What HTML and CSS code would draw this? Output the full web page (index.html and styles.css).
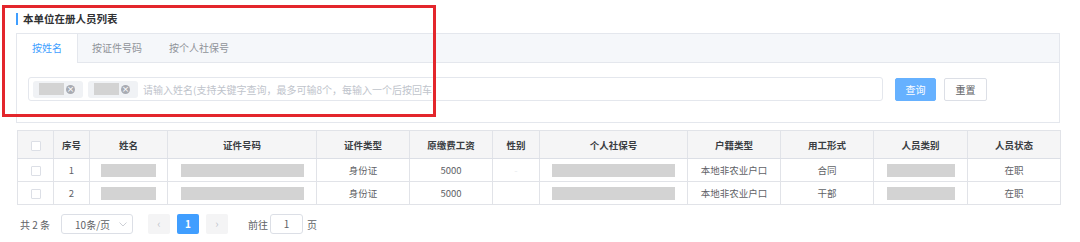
FILE: index.html
```html
<!DOCTYPE html>
<html lang="zh-CN">
<head>
    <meta charset="UTF-8">
    <title>本单位在册人员列表</title>
    <link rel="stylesheet" href="styles.css">
</head>
<body>
    <div class="page">
        <div class="section-title">本单位在册人员列表</div>

        <div class="tabs-card">
            <div class="tabs-header">
                <div class="tab active">按姓名</div>
                <div class="tab">按证件号码</div>
                <div class="tab">按个人社保号</div>
            </div>
            <div class="tabs-body">
                <div class="tag-input">
                    <span class="tag"><span class="mask"></span><span class="tag-close">×</span></span>
                    <span class="tag"><span class="mask"></span><span class="tag-close">×</span></span>
                    <span class="placeholder">请输入姓名(支持关键字查询，最多可输8个，每输入一个后按回车)</span>
                </div>
                <button class="btn btn-primary">查询</button>
                <button class="btn">重置</button>
            </div>
        </div>

        <table class="data-table">
            <colgroup>
                <col style="width:36px">
                <col style="width:36px">
                <col style="width:78px">
                <col style="width:149px">
                <col style="width:93px">
                <col style="width:83px">
                <col style="width:47px">
                <col style="width:148px">
                <col style="width:93px">
                <col style="width:93px">
                <col style="width:94px">
                <col style="width:93px">
            </colgroup>
            <thead>
                <tr>
                    <th><span class="checkbox"></span></th>
                    <th>序号</th>
                    <th>姓名</th>
                    <th>证件号码</th>
                    <th>证件类型</th>
                    <th>原缴费工资</th>
                    <th>性别</th>
                    <th>个人社保号</th>
                    <th>户籍类型</th>
                    <th>用工形式</th>
                    <th>人员类别</th>
                    <th>人员状态</th>
                </tr>
            </thead>
            <tbody>
                <tr>
                    <td><span class="checkbox"></span></td>
                    <td>1</td>
                    <td><span class="mask mask-name"></span></td>
                    <td><span class="mask mask-id"></span></td>
                    <td>身份证</td>
                    <td>5000</td>
                    <td><span class="faint">ᵕ</span></td>
                    <td><span class="mask mask-id"></span></td>
                    <td>本地非农业户口</td>
                    <td>合同</td>
                    <td><span class="mask mask-type"></span></td>
                    <td>在职</td>
                </tr>
                <tr>
                    <td><span class="checkbox"></span></td>
                    <td>2</td>
                    <td><span class="mask mask-name"></span></td>
                    <td><span class="mask mask-id"></span></td>
                    <td>身份证</td>
                    <td>5000</td>
                    <td></td>
                    <td><span class="mask mask-id"></span></td>
                    <td>本地非农业户口</td>
                    <td>干部</td>
                    <td><span class="mask mask-type"></span></td>
                    <td>在职</td>
                </tr>
            </tbody>
        </table>

        <div class="pagination">
            <span class="total">共 2 条</span>
            <div class="size-select">
                <span>10条/页</span>
                <svg class="chevron" width="8" height="5" viewBox="0 0 8 5"><path d="M0.5 0.5 L4 4 L7.5 0.5" fill="none" stroke="#c0c4cc" stroke-width="0.8"/></svg>
            </div>
            <div class="pager">
                <span class="pg-btn">‹</span>
                <span class="pg-num">1</span>
                <span class="pg-btn">›</span>
            </div>
            <span class="jump">前往</span>
            <span class="jump-input">1</span>
            <span class="jump">页</span>
        </div>
    </div>

    <!-- annotation frame -->
    <div class="highlight"></div>
</body>
</html>
```

FILE: styles.css
```css
* {
    margin: 0;
    padding: 0;
    box-sizing: border-box;
}

body {
    font-family: "Noto Sans CJK SC", "Noto Sans", sans-serif;
    background: #ffffff;
    color: #606266;
    font-size: 10px;
    width: 1080px;
    height: 242px;
    overflow: hidden;
    position: relative;
}

.page {
    padding: 13px 20px 0 16px;
}

.section-title {
    border-left: 2px solid #409eff;
    padding-left: 5px;
    height: 12px;
    line-height: 12px;
    font-size: 10.5px;
    font-weight: 700;
    color: #303133;
    margin-bottom: 8px;
}

.tabs-card {
    border: 1px solid #e4e7ed;
    height: 90px;
}

.tabs-header {
    display: flex;
    height: 29px;
    background: #f5f7fa;
    border-bottom: 1px solid #e4e7ed;
}

.tab {
    padding: 0 15px;
    line-height: 28px;
    font-size: 10px;
    color: #909399;
    margin-right: -1px;
}

.tab.active {
    background: #ffffff;
    color: #409eff;
    border-right: 1px solid #e4e7ed;
    height: 29px;
    width: 61px;
    text-align: center;
    padding: 0;
}

.tab:nth-child(2) {
    padding-left: 14px;
    padding-right: 15px;
    margin-left: 1px;
}

.tab:nth-child(3) {
    padding-left: 13px;
}

.tabs-body {
    display: flex;
    align-items: center;
    padding: 14px 0 0 11px;
}

.tag-input {
    width: 855px;
    height: 24px;
    border: 1px solid #e4e7ed;
    border-radius: 3px;
    display: flex;
    align-items: center;
    padding-left: 4px;
    gap: 5px;
}

.tag {
    display: flex;
    align-items: center;
    width: 50px;
    height: 17px;
    background: #f0f2f5;
    border-radius: 3px;
    padding-left: 6px;
}

.tag .mask {
    width: 25px;
    height: 12px;
}

.tag-close {
    width: 9px;
    height: 9px;
    margin-left: 2px;
    border-radius: 50%;
    background: #a8abb2;
    color: #ffffff;
    font-size: 9px;
    line-height: 8px;
    text-align: center;
    font-family: "DejaVu Sans", sans-serif;
}

.placeholder {
    color: #c0c4cc;
    font-size: 10px;
    white-space: nowrap;
    overflow: hidden;
    width: 289px;
}

.btn {
    height: 23px;
    width: 43px;
    border: 1px solid #dcdfe6;
    border-radius: 2px;
    background: #ffffff;
    color: #606266;
    font-family: "Noto Sans CJK SC", sans-serif;
    font-size: 10px;
    margin-left: 8px;
}

.btn-primary {
    width: 41px;
    background: #66b1ff;
    border-color: #66b1ff;
    color: #ffffff;
    margin-left: 12px;
}

.mask {
    display: inline-block;
    background: #d3d3d3;
    vertical-align: middle;
}

.mask-name {
    width: 55px;
    height: 13px;
}

.mask-id {
    width: 123px;
    height: 13px;
}

.mask-type {
    width: 68px;
    height: 13px;
}

.data-table {
    margin-top: 7px;
    margin-left: 1px;
    border-collapse: collapse;
    table-layout: fixed;
    width: 1043px;
    border: 1px solid #dcdfe6;
}

.data-table th,
.data-table td {
    border: 1px solid #e1e3e8;
    text-align: center;
    font-size: 9.5px;
    white-space: nowrap;
    overflow: hidden;
    padding: 0;
}

.data-table th {
    height: 28px;
    background: #f5f5f6;
    color: #3a3d42;
    font-weight: 700;
    border-bottom-color: #dcdfe6;
}

.data-table td {
    height: 23px;
    color: #606266;
}

.checkbox {
    display: inline-block;
    width: 10px;
    height: 10px;
    border: 1px solid #dcdfe6;
    border-radius: 1px;
    background: #ffffff;
    vertical-align: middle;
}

.faint {
    color: #dcdfe6;
    font-size: 7px;
}

.pagination {
    display: flex;
    align-items: center;
    margin-top: 9px;
    padding-left: 4px;
    height: 20px;
    font-size: 10px;
    color: #606266;
}

.total {
    margin-right: 11px;
}

.size-select {
    width: 72px;
    height: 20px;
    border: 1px solid #dcdfe6;
    border-radius: 3px;
    display: flex;
    align-items: center;
    justify-content: space-between;
    padding: 0 5px 0 13px;
}

.pager {
    display: flex;
    gap: 7px;
    margin-left: 15px;
}

.pg-btn,
.pg-num {
    width: 22px;
    height: 20px;
    line-height: 19px;
    text-align: center;
    background: #f4f4f5;
    color: #c0c4cc;
    border-radius: 2px;
    font-size: 11px;
}

.pg-num {
    background: #409eff;
    color: #ffffff;
    font-weight: 700;
    font-size: 10px;
}

.jump {
    margin-left: 4px;
}

.pager + .jump {
    margin-left: 20px;
}

.jump-input {
    width: 33px;
    height: 20px;
    line-height: 18px;
    text-align: center;
    border: 1px solid #dcdfe6;
    border-radius: 3px;
    margin-left: 2px;
}

.highlight {
    position: absolute;
    left: 2px;
    top: 5px;
    width: 434px;
    height: 112px;
    border: 3px solid #e3262c;
    pointer-events: none;
}
```
